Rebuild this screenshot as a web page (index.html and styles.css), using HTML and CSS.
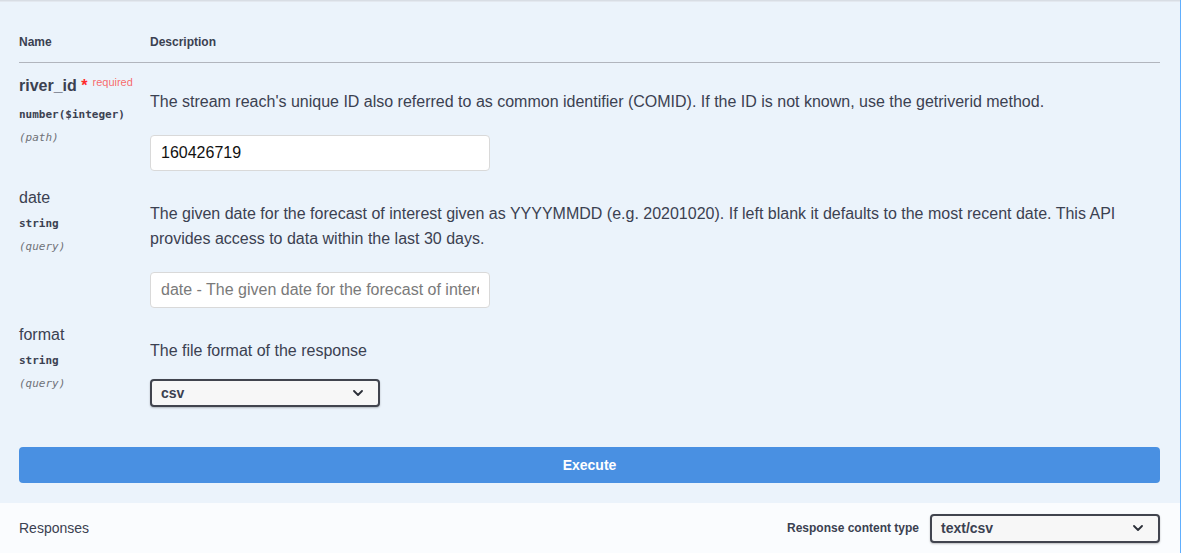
FILE: index.html
```html
<!DOCTYPE html>
<html lang="en">
<head>
<meta charset="utf-8">
<title>Parameters</title>
<link rel="stylesheet" href="styles.css">
</head>
<body>
<div class="opblock">
  <div class="params">
    <div class="table-head">
      <div class="col-name">Name</div>
      <div class="col-desc">Description</div>
    </div>
    <div class="rows">
      <div class="param-row">
        <div class="param-name-col">
          <div class="param-name param-name--required">river_id<span class="req-star">&nbsp;*</span><span class="req-label">required</span></div>
          <div class="param-type">number($integer)</div>
          <div class="param-in">(path)</div>
        </div>
        <div class="param-desc-col">
          <p class="param-desc">The stream reach's unique ID also referred to as common identifier (COMID). If the ID is not known, use the getriverid method.</p>
          <input class="param-input" type="text" value="160426719">
        </div>
      </div>
      <div class="param-row">
        <div class="param-name-col">
          <div class="param-name">date</div>
          <div class="param-type">string</div>
          <div class="param-in">(query)</div>
        </div>
        <div class="param-desc-col">
          <p class="param-desc">The given date for the forecast of interest given as YYYYMMDD (e.g. 20201020). If left blank it defaults to the most recent date. This API provides access to data within the last 30 days.</p>
          <input class="param-input" type="text" placeholder="date - The given date for the forecast of interest given as YYYYMMDD">
        </div>
      </div>
      <div class="param-row">
        <div class="param-name-col">
          <div class="param-name">format</div>
          <div class="param-type">string</div>
          <div class="param-in">(query)</div>
        </div>
        <div class="param-desc-col">
          <p class="param-desc">The file format of the response</p>
          <div class="select select--param">
            <span class="select-value">csv</span>
            <svg class="chevron" width="10" height="6" viewBox="0 0 10 6"><path d="M1 1 L5 5 L9 1" fill="none" stroke="#2b2f38" stroke-width="1.8" stroke-linecap="round" stroke-linejoin="round"/></svg>
          </div>
        </div>
      </div>
    </div>
    <div class="execute-wrap">
      <button class="execute" type="button">Execute</button>
    </div>
  </div>
  <div class="responses-header">
    <h4 class="responses-title">Responses</h4>
    <div class="content-type">
      <span class="content-type-label">Response content type</span>
      <div class="select select--response">
        <span class="select-value">text/csv</span>
        <svg class="chevron" width="10" height="6" viewBox="0 0 10 6"><path d="M1 1 L5 5 L9 1" fill="none" stroke="#2b2f38" stroke-width="1.8" stroke-linecap="round" stroke-linejoin="round"/></svg>
      </div>
    </div>
  </div>
</div>
</body>
</html>
```
FILE: styles.css
```css
* { box-sizing: border-box; }
html, body { margin: 0; padding: 0; background: #ffffff; }
body {
  font-family: "Liberation Sans", Arial, sans-serif;
  color: #3b4151;
  width: 1182px;
  height: 553px;
  overflow: hidden;
}
.opblock {
  width: 1181px;
  border-right: 1px solid #61affe;
  background: #ebf3fb;
}
.params {
  border-top: 1px solid #d8dde4;
  box-shadow: inset 0 1px 0 #e3e8ef;
  padding: 22px 20px 20px 19px;
}
.table-head {
  display: flex;
  padding: 12px 0;
  border-bottom: 1px solid #b1b5bd;
  font-size: 12px;
  font-weight: 700;
  line-height: 15px;
}
.col-name { width: 131px; flex: none; }
.rows { padding-top: 2px; }
.param-row {
  display: flex;
  padding: 10px 0 6px;
}
.param-name-col { width: 131px; flex: none; padding-top: 1px; }
.param-desc-col { flex: 1; }
.param-name {
  font-size: 16px;
  line-height: 20px;
}
.param-name--required { font-weight: 700; padding-bottom: 2px; }
.req-star { color: #ff2a2a; }
.req-label {
  font-size: 11px;
  font-weight: 400;
  color: rgba(255, 0, 0, 0.6);
  position: relative;
  top: -5px;
  padding-left: 5px;
}
.param-type {
  font-family: "DejaVu Sans Mono", "Liberation Mono", monospace;
  font-size: 11px;
  font-weight: 600;
  line-height: 16px;
  margin-top: 8px;
}
.param-in {
  font-family: "DejaVu Sans Mono", "Liberation Mono", monospace;
  font-size: 11px;
  font-style: italic;
  line-height: 16px;
  color: #6f7177;
  margin-top: 7px;
}
.param-desc {
  font-size: 16px;
  line-height: 25px;
  margin: 14px 0 0;
}
.param-input {
  display: block;
  width: 340px;
  height: 36px;
  margin-top: 21px;
  padding: 8px 10px;
  border: 1px solid #d9d9d9;
  border-radius: 4px;
  background: #ffffff;
  font-family: "Liberation Sans", Arial, sans-serif;
  font-size: 16px;
  color: #111111;
  outline: none;
}
.param-input::placeholder { color: #7a7a7a; }
.select {
  display: flex;
  align-items: center;
  justify-content: space-between;
  height: 28px;
  border: 2px solid #41444e;
  border-radius: 4px;
  background: #f7f7f7;
  box-shadow: 0 1px 2px rgba(0, 0, 0, 0.25);
  padding: 0 15px 0 9px;
  font-size: 14px;
  font-weight: 700;
  color: #3b4151;
}
.select--param { width: 230px; margin-top: 16px; }
.select--response { width: 230px; height: 29px; }
.chevron { display: block; flex: none; }
.execute-wrap { padding-top: 34px; }
.execute {
  display: block;
  width: 100%;
  height: 36px;
  border: none;
  border-radius: 4px;
  background: #4990e2;
  color: #ffffff;
  font-family: "Liberation Sans", Arial, sans-serif;
  font-size: 14px;
  font-weight: 700;
}
.responses-header {
  display: flex;
  align-items: center;
  justify-content: space-between;
  min-height: 50px;
  padding: 0 20px 0 19px;
  background: #fafcfe;
}
.responses-title {
  margin: 0;
  font-size: 14px;
  font-weight: 400;
}
.content-type { display: flex; align-items: center; }
.content-type-label {
  font-size: 12px;
  font-weight: 700;
  margin-right: 11px;
}
```
